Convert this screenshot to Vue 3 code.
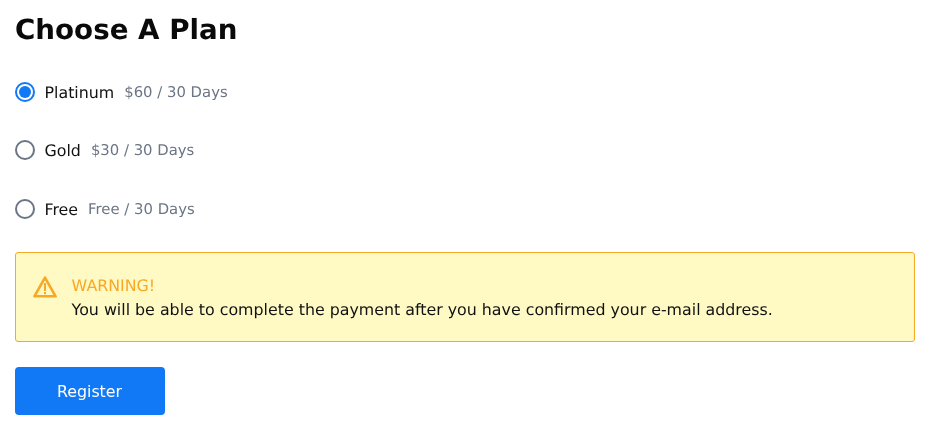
<template>
  <div class="page">
    <h2 class="title">Choose A Plan</h2>
    <div class="plans">
      <label v-for="plan in plans" :key="plan.name" class="plan">
        <span class="radio" :class="{ checked: selected === plan.name }" @click="selected = plan.name"></span>
        <span class="plan-name">{{ plan.name }}</span>
        <span class="plan-price">{{ plan.price }}</span>
      </label>
    </div>
    <div class="warning">
      <svg class="warning-icon" width="24" height="24" viewBox="0 0 24 24" fill="none" stroke="#f9a825">
        <path d="M12 3.6 L22.6 22.3 H1.4 Z" stroke-width="2.6" stroke-linejoin="round" />
        <path d="M12 9 V17" stroke-width="2" />
        <path d="M12 18 V20.2" stroke-width="2" />
      </svg>
      <div class="warning-text">
        <div class="warning-title">WARNING!</div>
        <div>You will be able to complete the payment after you have confirmed your e-mail address.</div>
      </div>
    </div>
    <button class="register">Register</button>
  </div>
</template>

<script setup>
import { ref } from 'vue'
const selected = ref('Platinum')
const plans = [
  { name: 'Platinum', price: '$60 / 30 Days' },
  { name: 'Gold', price: '$30 / 30 Days' },
  { name: 'Free', price: 'Free / 30 Days' }
]
</script>

<style>
body { background: #fff; }
</style>

<style scoped>
.page {
  padding: 11px 21px 20px 15px;
  font-family: 'DejaVu Sans', sans-serif;
  font-size: 15.84px;
  color: #111;
  text-rendering: geometricPrecision;
  will-change: transform;
}
.title {
  margin: 0;
  font-size: 27.72px;
  line-height: 38px;
  font-weight: 700;
  color: #0a0a0a;
}
.plans {
  margin-top: 31px;
  display: flex;
  flex-direction: column;
  gap: 34px;
}
.plan {
  display: flex;
  align-items: center;
  height: 24px;
}
.plan:last-child { margin-top: 1px; }
.radio {
  width: 20px;
  height: 20px;
  box-sizing: border-box;
  border: 2px solid #6b7585;
  border-radius: 50%;
  margin-right: 9.5px;
  position: relative;
}
.radio.checked {
  border-color: #1178f6;
}
.radio.checked::after {
  content: '';
  position: absolute;
  inset: 2px;
  background: #1178f6;
  border-radius: 50%;
}
.plan-name { margin-right: 10px; }
.plan-price { color: #6b7585; font-size: 14.85px; }
.warning {
  margin-top: 31px;
  height: 90px;
  box-sizing: border-box;
  background: #fff9c4;
  border: 1px solid #f9a825;
  border-radius: 3px;
  display: flex;
  align-items: flex-start;
  padding: 21px 17px 0;
  gap: 14.6px;
}
.warning-text { line-height: 24px; }
.warning-title { color: #f9a825; }
.register {
  display: block;
  margin-top: 25px;
  width: 150px;
  height: 48px;
  padding: 0 1px 0 0;
  background: #1178f6;
  color: #fff;
  border: none;
  border-radius: 4px;
  font-family: inherit;
  font-size: 15.84px;
}
</style>
